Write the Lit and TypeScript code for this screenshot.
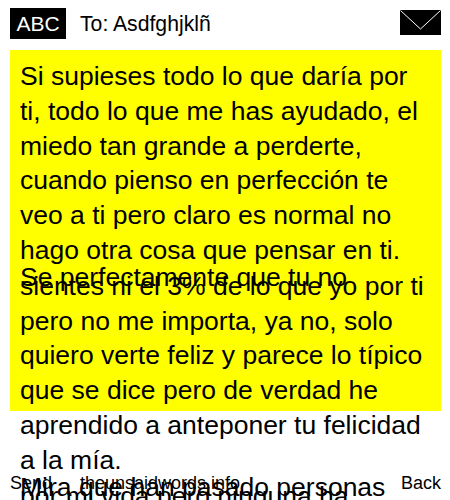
import { LitElement, html, css } from "lit";
import { customElement } from "lit/decorators.js";

@customElement("app-root")
export class AppRoot extends LitElement {
  static styles = css`
    :host {
      display: block;
      position: relative;
      width: 450px;
      height: 500px;
      overflow: hidden;
      background: #fff;
      color: #000;
      font-family: "Liberation Sans", Arial, sans-serif;
    }
    .head {
      display: flex;
      align-items: flex-start;
      height: 50px;
      padding: 8px 9px 0 10px;
      box-sizing: border-box;
    }
    .abc {
      width: 56px;
      height: 31px;
      background: #000;
      color: #fff;
      font-size: 21px;
      line-height: 31px;
      text-align: center;
    }
    .to {
      margin-left: 14px;
      font-size: 21.2px;
      line-height: 31px;
      flex: 1;
    }
    .env {
      display: block;
      margin-top: 2px;
    }
    .msg {
      margin-left: 10px;
      width: 431px;
      height: 361px;
      box-sizing: border-box;
      padding: 9px 10px 0;
      background: #ff0;
      font-size: 26.5px;
      line-height: 34.8px;
    }
    .para {
      margin-bottom: -8px;
    }
    .short {
      height: 9px;
    }
    .foot {
      position: absolute;
      left: 10px;
      right: 9px;
      top: 472px;
      display: flex;
      justify-content: space-between;
      font-size: 18px;
      line-height: 22px;
    }
    .site {
      position: absolute;
      left: 70px;
    }
  `;

  render() {
    return html`
      <div class="head">
        <div class="abc">ABC</div>
        <div class="to">To: Asdfghjklñ</div>
        <svg class="env" width="41" height="25" viewBox="0 0 41 25">
          <rect width="41" height="25" fill="#000" />
          <path d="M0.5 0.5L20.5 19L40.5 0.5" fill="none" stroke="#fff" stroke-width="1" />
        </svg>
      </div>
      <div class="msg">
        <div class="para">Si supieses todo lo que daría por ti, todo lo que me has ayudado, el miedo tan grande a perderte, cuando pienso en perfección te veo a ti pero claro es normal no hago otra cosa que pensar en ti.</div>
        <div class="short">Se perfectamente que tu no</div>
        <div class="para">sientes ni el 3% de lo que yo por ti pero no me importa, ya no, solo quiero verte feliz y parece lo típico que se dice pero de verdad he aprendido a anteponer tu felicidad a la mía.</div>
        <div class="short">Mira que han pasado personas</div>
        <div>por mi vida pero ninguna ha</div>
      </div>
      <div class="foot">
        <span>Send</span>
        <span class="site">theunsaidwords.info</span>
        <span>Back</span>
      </div>
    `;
  }
}
